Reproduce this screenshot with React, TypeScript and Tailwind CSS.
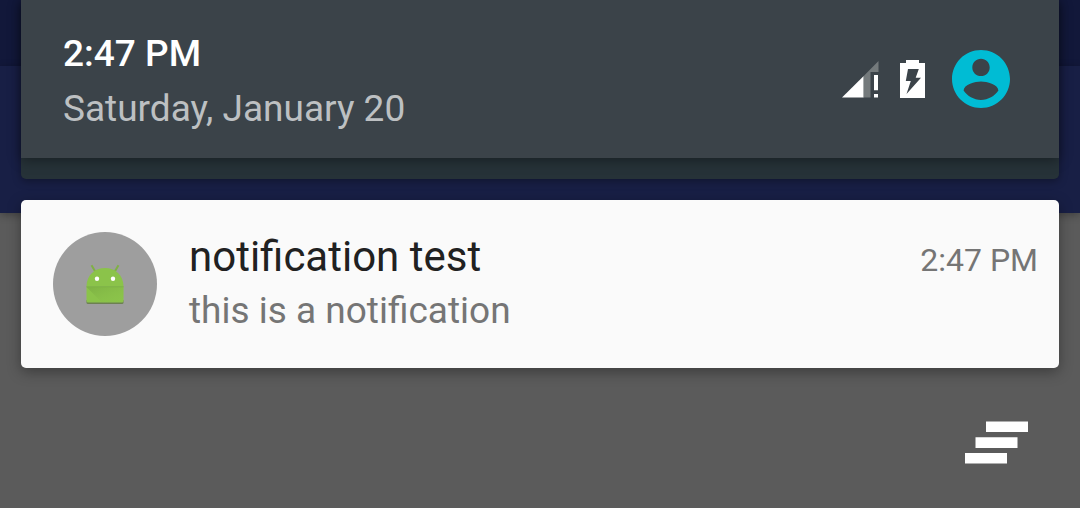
function SignalIcon() {
  return (
    <svg role="img" aria-label="Mobile signal" viewBox="0 0 37 38" className="h-[38px] w-[37px]">
      <path fill="#fff" d="M0 37.5 21.7 16v21.5z" />
      <path fill="#747a7c" d="M21.7 16 36.5 1v11H28.5v25.5h-6.8z" />
      <path fill="#fff" d="M32 15h4v15.2h-4zM32 34h4v3.5h-4z" />
    </svg>
  );
}

function BatteryIcon() {
  return (
    <svg role="img" aria-label="Battery charging" viewBox="0 0 25 38" className="h-[38px] w-[25px]">
      <path
        fill="#fff"
        fillRule="evenodd"
        d="M6 0h13v3h6v35H0V3h6zM8 9 5.8 21h5L6.5 34 21 17.800h-5.300L18.800 9z"
      />
    </svg>
  );
}

function AccountIcon() {
  return (
    <svg aria-hidden="true" viewBox="2 2 20 20" className="size-[58px]">
      <path
        fill="#00bcd4"
        d="M12 2C6.48 2 2 6.48 2 12s4.48 10 10 10 10-4.48 10-10S17.52 2 12 2zm0 3c1.66 0 3 1.34 3 3s-1.34 3-3 3-3-1.34-3-3 1.34-3 3-3zm0 14.2c-2.5 0-4.71-1.28-6-3.22.03-1.99 4-3.08 6-3.08 1.99 0 5.97 1.09 6 3.08-1.29 1.94-3.5 3.22-6 3.22z"
      />
    </svg>
  );
}

function AppIcon() {
  return (
    <svg role="img" aria-label="App icon" viewBox="0 0 104 104" className="size-[104px] shrink-0">
      <defs>
        <linearGradient id="pocket" x1="0" y1="0" x2="1" y2="1">
          <stop offset="0" stopColor="#6f9f3c" />
          <stop offset="1" stopColor="#8bc34a" stopOpacity="0" />
        </linearGradient>
      </defs>
      <circle cx="52" cy="52" r="52" fill="#9e9e9e" />
      <path d="M38.5 33.3 42.5 40M65.5 33.3 61.5 40" stroke="#7fb044" strokeWidth="2" />
      <path d="M33.5 68h37v2.500a1.500 1.500 0 0 1-1.500 1.500H35a1.500 1.500 0 0 1-1.500-1.500z" fill="#6d8052" />
      <path d="M33.500 54.500C33.500 43 42 36 52 36s18.500 7 18.500 18.500z" fill="#8bc34a" />
      <path d="M33.500 54.500h37V69a1.500 1.500 0 0 1-1.500 1.500H35a1.500 1.500 0 0 1-1.500-1.500z" fill="#8bc34a" />
      <path d="M33.500 55 49 70.500H69l1.500-1.500V55z" fill="url(#pocket)" opacity=".5" />
      <path d="M33.500 54.300h37v.9h-37z" fill="#7cb342" />
      <circle cx="44" cy="46.700" r="2.200" fill="#fff" />
      <circle cx="60" cy="46.700" r="2.200" fill="#fff" />
    </svg>
  );
}

function ClearAllIcon() {
  return (
    <svg aria-hidden="true" viewBox="0 0 63 43" className="h-[43px] w-[63px]">
      <path fill="#fff" d="M21 .4h42V11H21zM10.500 16.200h42V27h-42zM0 32h42v10.600H0z" />
    </svg>
  );
}

export default function App() {
  return (
    <div className="grid min-h-screen overflow-hidden bg-[#5b5b5b] font-['Roboto',sans-serif]">
      <div aria-hidden="true" className="col-start-1 row-start-1 flex flex-col">
        <div className="h-[66px] bg-[#12183a]" />
        <div className="h-[147px] bg-[#181f45] shadow-[0_2px_8px_rgba(0,0,0,0.3)]" />
      </div>

      <div className="relative col-start-1 row-start-1 flex flex-col px-[21px]">
        <header className="rounded-b-[5px] bg-[#263238] pb-[21px] shadow-[0_2px_8px_rgba(0,0,0,0.35)]">
          <div className="flex h-[158px] items-center justify-between bg-[#3b4349] pr-[49px] pl-[42px] shadow-[0_2px_12px_rgba(0,0,0,0.4)]">
            <div className="pt-1 text-[37px] leading-[55px]">
              <time className="block font-medium text-white">2:47 PM</time>
              <p className="text-[#bdc0c2]">Saturday, January 20</p>
            </div>
            <div className="flex items-center">
              <SignalIcon />
              <span className="ml-[21px]">
                <BatteryIcon />
              </span>
              <button type="button" aria-label="Account" className="ml-[27px]">
                <AccountIcon />
              </button>
            </div>
          </div>
        </header>

        <main className="mt-[21px]">
          <article className="flex h-[168px] items-center gap-8 rounded-[5px] bg-[#fafafa] pr-[21px] pl-8 shadow-[0_4px_14px_rgba(0,0,0,0.35)]">
            <AppIcon />
            <div className="grow">
              <div className="flex items-baseline justify-between">
                <h2 className="text-[42px] leading-[54px] text-[#212121]">notification test</h2>
                <time className="text-[32px] leading-[40px] text-[#757575]">2:47 PM</time>
              </div>
              <p className="text-[37px] leading-[54px] text-[#757575]">this is a notification</p>
            </div>
          </article>
        </main>

        <div className="mt-[53px] flex justify-end pr-[31px]">
          <button type="button" aria-label="Clear all notifications">
            <ClearAllIcon />
          </button>
        </div>
      </div>
    </div>
  );
}
